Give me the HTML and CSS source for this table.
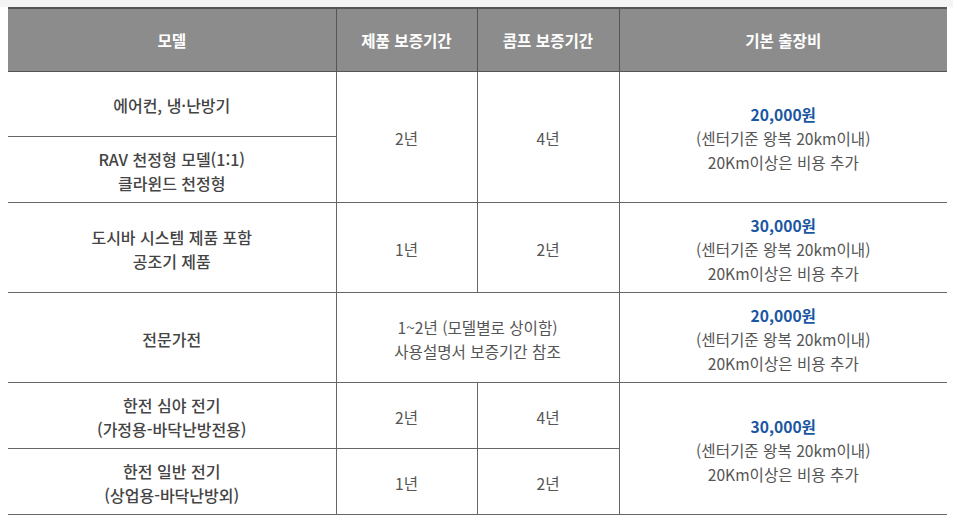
FILE: index.html
```html
<!DOCTYPE html>
<html lang="ko">
<head>
<meta charset="utf-8">
<link rel="stylesheet" href="styles.css">
</head>
<body>
<div class="topbar"></div>
<div class="wrap">
<table class="warranty">
  <colgroup>
    <col class="c-model"><col class="c-prod"><col class="c-comp"><col class="c-fee">
  </colgroup>
  <thead>
    <tr class="h-row">
      <th>모델</th><th>제품 보증기간</th><th>콤프 보증기간</th><th>기본 출장비</th>
    </tr>
  </thead>
  <tbody>
    <tr class="r65">
      <td class="model">에어컨, 냉·난방기</td>
      <td rowspan="2">2년</td>
      <td rowspan="2">4년</td>
      <td rowspan="2" class="fee"><strong>20,000원</strong><br>(센터기준 왕복 20km이내)<br>20Km이상은 비용 추가</td>
    </tr>
    <tr class="r66">
      <td class="model">RAV 천정형 모델(1:1)<br>클라윈드 천정형</td>
    </tr>
    <tr class="r90">
      <td class="model">도시바 시스템 제품 포함<br>공조기 제품</td>
      <td>1년</td>
      <td>2년</td>
      <td class="fee"><strong>30,000원</strong><br>(센터기준 왕복 20km이내)<br>20Km이상은 비용 추가</td>
    </tr>
    <tr class="r90">
      <td class="model">전문가전</td>
      <td colspan="2">1~2년 (모델별로 상이함)<br>사용설명서 보증기간 참조</td>
      <td class="fee"><strong>20,000원</strong><br>(센터기준 왕복 20km이내)<br>20Km이상은 비용 추가</td>
    </tr>
    <tr class="r66">
      <td class="model">한전 심야 전기<br>(가정용-바닥난방전용)</td>
      <td>2년</td>
      <td>4년</td>
      <td rowspan="2" class="fee"><strong>30,000원</strong><br>(센터기준 왕복 20km이내)<br>20Km이상은 비용 추가</td>
    </tr>
    <tr class="r66">
      <td class="model">한전 일반 전기<br>(상업용-바닥난방외)</td>
      <td>1년</td>
      <td>2년</td>
    </tr>
  </tbody>
</table>
</div>
</body>
</html>
```
FILE: styles.css
```css
html, body {
  margin: 0;
  padding: 0;
  background: #ffffff;
}
body {
  font-family: "Noto Sans CJK KR", "Noto Sans", sans-serif;
  color: #555555;
}
.topbar {
  height: 7px;
  background: #f4f4f4;
}
.wrap {
  padding-left: 8px;
}
.warranty {
  width: 939px;
  border-collapse: collapse;
  table-layout: fixed;
  border-top: 2px solid #555555;
  border-bottom: 1px solid #555555;
  font-size: 15.6px;
  line-height: 24px;
}
.c-model { width: 328px; }
.c-prod { width: 141px; }
.c-comp { width: 142px; }
.c-fee { width: 328px; }
.warranty th,
.warranty td {
  text-align: center;
  vertical-align: middle;
  padding: 0;
  border: 1px solid #666666;
}
.warranty td {
  padding-top: 3px;
}
.warranty th:first-child,
.warranty td.model {
  border-left: none;
}
.warranty th:last-child,
.warranty td.fee {
  border-right: none;
}
.warranty th {
  background: #8c8c8c;
  color: #ffffff;
  font-weight: 700;
  border-top: none;
  border-color: #555555;
}
.h-row { height: 63px; }
.r65 { height: 65px; }
.r66 { height: 66px; }
.r90 { height: 90px; }
.model {
  color: #444444;
  font-weight: 500;
  font-size: 16px;
}
.fee strong {
  color: #1a56a2;
  font-weight: 700;
}
```
